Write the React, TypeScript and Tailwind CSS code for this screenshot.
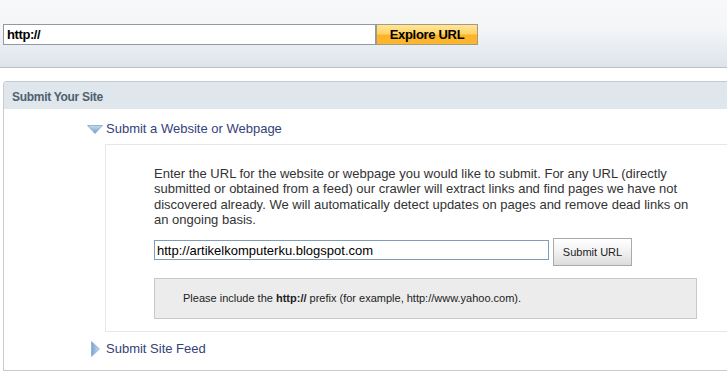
export default function App() {
  return (
    <div className="w-[727px] h-[372px] overflow-hidden bg-white font-['Liberation_Sans',Arial,sans-serif] text-[#333]">
      {/* top explore bar */}
      <div className="h-[68px] border-b border-[#b8c2cb] bg-[linear-gradient(to_bottom,#f7f8fa_0%,#f4f6f8_42%,#dde4ea_100%)] pt-[24px] pl-[3px]">
        <div className="flex">
          <input
            type="text"
            defaultValue="http://"
            className="w-[373px] h-[21px] border border-[#8f9aa5] bg-white px-[3px] text-[13px] font-bold text-black tracking-[-0.4px] outline-none"
          />
          <button className="w-[102px] h-[21px] border border-[#a59a7a] bg-[linear-gradient(to_bottom,#ffe59c_0%,#ffd465_45%,#fbb42a_55%,#fbb72f_100%)] text-[13px] font-bold text-black tracking-[-0.3px]">
            Explore URL
          </button>
        </div>
      </div>

      {/* submit panel */}
      <div className="mt-[13px] ml-[3px] h-[290px] border border-r-0 border-[#c3ccd3] rounded-tl-[4px] overflow-hidden">
        <div className="h-[27px] bg-[#dfe6ec] pl-[8px] pb-[3px] flex items-end text-[12px] font-bold text-[#4f5f6e] tracking-[-0.3px]">
          Submit Your Site
        </div>

        <div className="pl-[83px] h-[35px] pt-[5px] flex items-center gap-[3px]">
          <svg width="16" height="9" viewBox="0 0 16 9">
            <defs>
              <linearGradient id="dn" x1="0" y1="0" x2="0" y2="1">
                <stop offset="0" stopColor="#c9dcef" />
                <stop offset="1" stopColor="#6f9ccb" />
              </linearGradient>
            </defs>
            <polygon points="0.5,0.5 15.5,0.5 8,8.5" fill="url(#dn)" stroke="#7fa6cf" strokeWidth="0.8" />
          </svg>
          <span className="text-[13px] text-[#34427a]">Submit a Website or Webpage</span>
        </div>

        <div className="ml-[101px] border-t border-l border-b border-[#e6e6e6] pl-[48px] pt-[21px] pb-[12px]">
          <p className="w-[540px] text-[13px] leading-[15.3px] text-[#333]">
            Enter the URL for the website or webpage you would like to submit. For any URL (directly
            submitted or obtained from a feed) our crawler will extract links and find pages we have not
            discovered already. We will automatically detect updates on pages and remove dead links on
            an ongoing basis.
          </p>
          <div className="flex items-start gap-[4px] mt-[11px]">
            <input
              type="text"
              defaultValue="http://artikelkomputerku.blogspot.com"
              className="mt-[2px] w-[395px] h-[20px] border border-[#7f9db9] px-[2px] text-[13px] text-black outline-none"
            />
            <button className="w-[79px] h-[28px] border border-[#a9a9a9] bg-[linear-gradient(to_bottom,#ffffff_0%,#f1f1f1_50%,#dcdcdc_100%)] text-[11px] text-[#222]">
              Submit URL
            </button>
          </div>
          <div className="mt-[12px] w-[543px] h-[41px] border border-[#c8c8c8] bg-[#ececec] pl-[28px] flex items-center text-[11px] text-[#222]">
            <span>
              Please include the <b>http://</b> prefix (for example, http://www.yahoo.com).
            </span>
          </div>
        </div>

        <div className="pl-[87px] h-[34px] flex items-center gap-[6px]">
          <svg width="9" height="16" viewBox="0 0 9 16">
            <defs>
              <linearGradient id="rt" x1="0" y1="0" x2="1" y2="0">
                <stop offset="0" stopColor="#7aa3cf" />
                <stop offset="1" stopColor="#c6daef" />
              </linearGradient>
            </defs>
            <polygon points="0.5,0.5 8.5,8 0.5,15.5" fill="url(#rt)" stroke="#8fb0d4" strokeWidth="0.8" />
          </svg>
          <span className="text-[13px] text-[#34427a]">Submit Site Feed</span>
        </div>
      </div>
    </div>
  );
}
